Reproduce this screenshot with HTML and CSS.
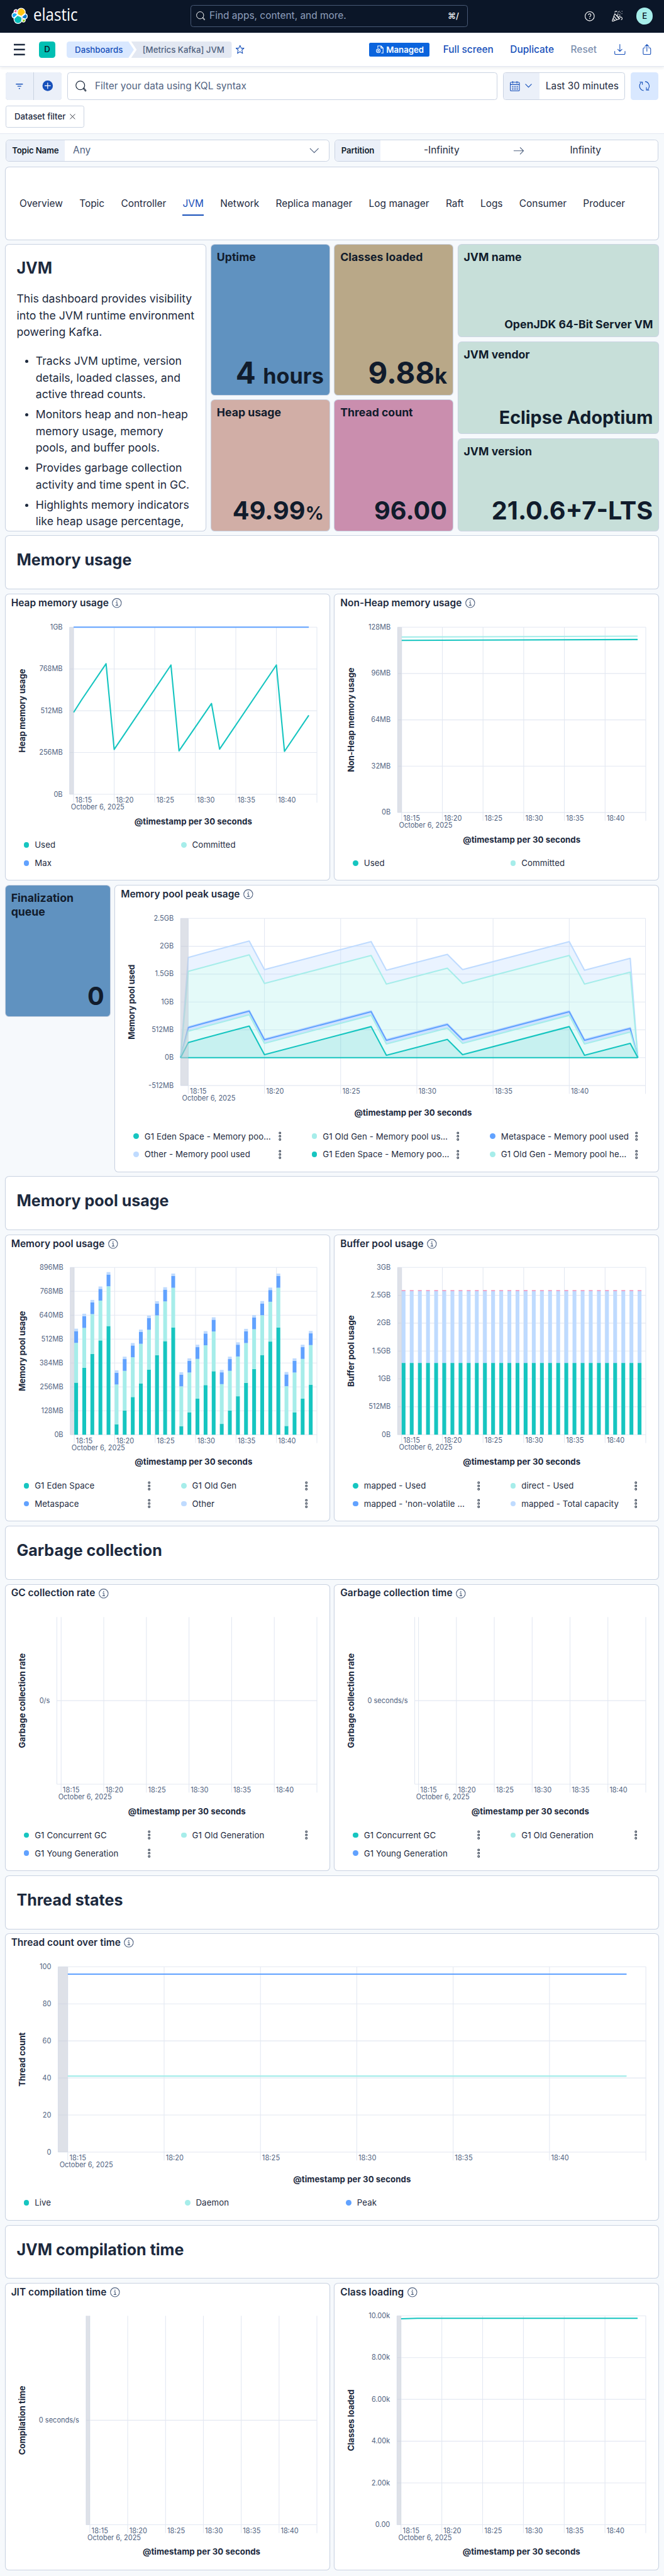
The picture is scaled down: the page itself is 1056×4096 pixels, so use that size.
FILE: index.html
```html
<!DOCTYPE html>
<html lang="en">
<head>
<meta charset="utf-8">
<title>[Metrics Kafka] JVM - Elastic</title>
<link rel="stylesheet" href="styles.css">
</head>
<body>
<svg class="defs" width="0" height="0" aria-hidden="true">
  <symbol id="i-info" viewBox="0 0 16 16"><circle cx="8" cy="8" r="6.5" fill="none" stroke="currentColor"/><path d="M6.4 7.2H8.3V11M6.2 11.2H10" fill="none" stroke="currentColor"/><circle cx="8" cy="5" r=".8" fill="currentColor"/></symbol>
  <symbol id="i-search" viewBox="0 0 16 16"><circle cx="7" cy="7" r="6.3" fill="none" stroke="currentColor" stroke-width="1.1"/><path d="M11.3 11.6l.9-.8 3 3.4a.8.8 0 01-1.1 1.1z" fill="none" stroke="currentColor" stroke-width="1"/></symbol>
  <symbol id="i-menu" viewBox="0 0 4 14"><path d="M.9 1.2h2.2v2.2H.9zM.9 5.9h2.2v2.2H.9zM.9 10.6h2.2v2.2H.9z" fill="none" stroke="currentColor" stroke-width=".9"/></symbol>
</svg>

<header class="topbar">
  <a class="brand" aria-label="Elastic">
    <svg width="24" height="24" viewBox="0 0 32 32"><g stroke="#fff" stroke-width="1.6" stroke-linejoin="round"><path fill="#FEC514" d="M12.58 13.787l7.002 3.211 7.066-6.213a7.849 7.849 0 00.152-1.557c0-4.287-3.464-7.775-7.751-7.775a7.73 7.73 0 00-6.35 3.387l-1.176 6.126 1.057 2.821z"/><path fill="#02BCB7" d="M5.333 21.228A7.956 7.956 0 005.18 22.8c0 4.3 3.487 7.797 7.773 7.797a7.73 7.73 0 006.393-3.406l1.166-6.097-1.556-2.986-7.03-3.215-6.593 6.335z"/><path fill="#F04E98" d="M5.288 9.067l4.8 1.137L11.14 4.73a3.785 3.785 0 00-6.043 3.025c0 .445.07.886.19 1.312z"/><path fill="#1BA9F5" d="M4.872 10.214a5.29 5.29 0 00-3.513 5.001 5.3 5.3 0 003.39 4.951l6.734-6.1-1.236-2.65-5.375-1.202z"/><path fill="#93C90E" d="M20.873 27.19a3.762 3.762 0 002.285.777 3.785 3.785 0 003.594-5.03l-4.8-1.127-1.079 5.38z"/><path fill="#07C" d="M21.848 20.563l5.283 1.238a5.3 5.3 0 003.513-5.003 5.284 5.284 0 00-3.387-4.945l-6.91 6.067 1.501 2.643z"/></g></svg>
    <svg class="wordmark" width="66" height="28" viewBox="0 0 66 28"><text x="0" y="20.6" textLength="64" lengthAdjust="spacingAndGlyphs">elastic</text></svg>
  </a>
  <div class="globalsearch">
    <svg width="13" height="13"><use href="#i-search"/></svg>
    <span>Find apps, content, and more.</span><kbd>⌘/</kbd>
  </div>
  <nav class="topicons">
    <svg width="16" height="16" viewBox="0 0 16 16" fill="none" stroke="#fff"><circle cx="8" cy="8" r="6.6"/><path d="M6.2 6.3a1.8 1.8 0 113 1.3C8.500 8.100 8 8.400 8 9.300"/><path d="M8 10.600v1.200" stroke-width="1.300"/></svg>
    <svg width="16" height="16" viewBox="0 0 16 16" fill="none" stroke="#fff" stroke-linejoin="round"><path d="M4.300 4.400L.7 14.300a.6.6 0 00.8.8l9.900-3.600zM3.200 8.200l4.400 5M2 11.200l2.400 2.900M5.200 5.400l5 5.800M7.300 7.400l2-2.300M9.300 9.300l3-1.500M4.400 2.400C4.400.8 6.500.2 7.600 1.500M12 9.800c1.400-1.400 3.600.1 2.800 2.200-.3.800-1 1-1.600.9M10.400 6.100h1.800"/><path d="M9.200 1.500h1M11.500 3h1M14.200.9h1M14 4.300h1M8.300 3.500h1M11 .9h.8" stroke-dasharray="1 .3"/></svg>
    <span class="avatar">E</span>
  </nav>
</header>

<header class="appbar">
  <svg class="burger" width="16" height="16" viewBox="0 0 16 16"><path d="M0 .9h16M0 8h16M0 15.100h16" stroke="#1D2A3E" stroke-width="2.300"/></svg>
  <span class="space">D</span>
  <nav class="crumbs"><a class="crumb first">Dashboards</a><span class="crumb last">[Metrics Kafka] JVM</span></nav>
  <svg class="star" width="14" height="14" viewBox="0 0 14 14"><path d="M7 1.100l1.700 4h4l-3 2.600 1 4.900L7 10.200l-3.700 2.400 1-4.900-3-2.600h4z" fill="none" stroke="#1750BA" stroke-linejoin="round"/></svg>
  <div class="actions">
    <span class="badge"><svg width="12" height="12" viewBox="0 0 12 12" fill="none" stroke="#fff"><path d="M3.500 4V.9h4.700l2.900 2.900v7.300H8.500M8 .9V4h3"/><circle cx="4.200" cy="8" r="2.700"/><circle cx="4.200" cy="8" r=".8"/></svg>Managed</span>
    <a class="act">Full screen</a><a class="act">Duplicate</a><a class="act off">Reset</a>
    <svg width="16" height="16" viewBox="0 0 16 16" fill="none" stroke="#1750BA"><path d="M8 .2v10.300M4.700 7.300L8 10.600l3.300-3.300M.6 10.200v3.300a1.500 1.500 0 001.500 1.500h11.800a1.500 1.500 0 001.500-1.500v-3.300"/></svg>
    <svg class="share" width="16" height="16" viewBox="0 0 16 16" fill="none" stroke="#1750BA"><path d="M8 10.800V.8M4.900 3.800L8 .7l3.100 3.100M6 5.500H4.100a1.500 1.500 0 00-1.500 1.500v6.500A1.500 1.500 0 004.100 15h7.800a1.500 1.500 0 001.500-1.500V7a1.500 1.500 0 00-1.500-1.500H10"/></svg>
  </div>
</header>

<section class="querybar">
  <div class="query-row">
    <div class="filters">
      <span><svg width="16" height="16" viewBox="0 0 16 16"><path d="M3 5.200h10M5.300 8.300h5.400M7.200 11.500h1.600" stroke="#1750BA" stroke-width="1.300"/></svg></span>
      <span><svg width="16" height="16" viewBox="0 0 16 16"><circle cx="8" cy="7.600" r="7.500" fill="#1750BA"/><path d="M8 3.200v8.800M3.600 7.600h8.800" stroke="#fff" stroke-width="1.100"/></svg></span>
    </div>
    <div class="kql"><svg width="16" height="16"><use href="#i-search"/></svg>Filter your data using KQL syntax</div>
    <div class="date">
      <span class="quick"><svg width="16" height="16" viewBox="0 0 16 16"><rect x="1.500" y="2.500" width="13" height="12.500" rx="1.200" fill="none" stroke="#1750BA"/><path d="M1.500 5.800h13M5 .8v3.400M11 .8v3.400" stroke="#1750BA"/><path d="M4 8.500h8.500M4 10.700h8.500M4 12.800h8.500" stroke="#1750BA" stroke-width="1.200" stroke-dasharray="2 1.200"/></svg>
      <svg width="10" height="6" viewBox="0 0 10 6"><path d="M.5.500L5 5.200 9.500.5" fill="none" stroke="#1750BA"/></svg></span>
      <span class="range">Last 30 minutes</span>
    </div>
    <span class="refresh"><svg width="16" height="16" viewBox="0 0 16 16" fill="none" stroke="#1750BA"><path d="M7 14.500A6.600 6.600 0 013.300 3M1.200 2.300h3.900v3.900M9 1.500A6.600 6.600 0 0112.700 13M14.800 13.700h-3.900V9.800"/></svg></span>
  </div>
  <span class="pill">Dataset filter <svg width="8" height="8" viewBox="0 0 8 8"><path d="M.4.400l7.200 7.200M7.600.4L.4 7.600" stroke="#343741" stroke-width=".9"/></svg></span>
</section>

<main class="dash">
  <div class="controls">
    <div class="control"><label>Topic Name</label><span class="any">Any</span><svg width="14" height="8" viewBox="0 0 14 8"><path d="M.8.800L7 7 13.200.8" fill="none" stroke="#516381"/></svg></div>
    <div class="control"><label>Partition</label><span class="lo">-Infinity</span><svg class="arrow" width="16" height="16" viewBox="0 0 16 16"><path d="M.8 8h14M10 3l5 5-5 5" fill="none" stroke="#516381"/></svg><span class="hi">Infinity</span></div>
  </div>

  <div class="grid">
    <nav class="panel w48 h4 tabs"><a>Overview</a><a>Topic</a><a>Controller</a><a class="on">JVM</a><a>Network</a><a>Replica manager</a><a>Log manager</a><a>Raft</a><a>Logs</a><a>Consumer</a><a>Producer</a></nav>

    <article class="panel w15 h15 prose">
      <h2>JVM</h2>
      <p>This dashboard provides visibility into the JVM runtime environment powering Kafka.</p>
      <ul>
        <li>Tracks JVM uptime, version details, loaded classes, and active thread counts.</li>
        <li>Monitors heap and non-heap memory usage, memory pools, and buffer pools.</li>
        <li>Provides garbage collection activity and time spent in GC.</li>
        <li>Highlights memory indicators like heap usage percentage,</li>
      </ul>
    </article>
    <div class="stack w9 h15">
      <div class="panel tile h8 blue"><h3>Uptime</h3><b class="v42">4 <small>hours</small></b></div>
      <div class="panel tile h7 rose"><h3>Heap usage</h3><b class="v36">49.99<small>%</small></b></div>
    </div>
    <div class="stack w9 h15">
      <div class="panel tile h8 sand"><h3>Classes loaded</h3><b class="v42">9.88<small>k</small></b></div>
      <div class="panel tile h7 pink"><h3>Thread count</h3><b class="v36">96.00</b></div>
    </div>
    <div class="stack w15 h15">
      <div class="panel tile h5 mint"><h3>JVM name</h3><b class="v16">OpenJDK 64-Bit Server VM</b></div>
      <div class="panel tile h5 mint"><h3>JVM vendor</h3><b class="v26">Eclipse Adoptium</b></div>
      <div class="panel tile h5 mint"><h3>JVM version</h3><b class="v36">21.0.6+7-LTS</b></div>
    </div>

    <div class="panel w48 h3 section"><h2>Memory usage</h2></div>

    <section class="panel w24 h15 vis"><h4>Heap memory usage <svg><use href="#i-info"/></svg></h4><svg class="chart" data-chart="heap"></svg>
      <ul class="legend"><li class="c1">Used</li><li class="c2">Committed</li><li class="c3">Max</li></ul></section>
    <section class="panel w24 h15 vis"><h4>Non-Heap memory usage <svg><use href="#i-info"/></svg></h4><svg class="chart" data-chart="nonheap"></svg>
      <ul class="legend"><li class="c1">Used</li><li class="c2">Committed</li></ul></section>

    <div class="stack w8 h15"><div class="panel tile h7 blue"><h3>Finalization queue</h3><b class="v36">0</b></div></div>
    <section class="panel w40 h15 vis"><h4>Memory pool peak usage <svg><use href="#i-info"/></svg></h4><svg class="chart" data-chart="peak"></svg>
      <ul class="legend three">
        <li class="c1">G1 Eden Space - Memory poo…<svg><use href="#i-menu"/></svg></li><li class="c2">G1 Old Gen - Memory pool us…<svg><use href="#i-menu"/></svg></li><li class="c3">Metaspace - Memory pool used<svg><use href="#i-menu"/></svg></li>
        <li class="c4">Other - Memory pool used<svg><use href="#i-menu"/></svg></li><li class="c1">G1 Eden Space - Memory poo…<svg><use href="#i-menu"/></svg></li><li class="c2">G1 Old Gen - Memory pool he…<svg><use href="#i-menu"/></svg></li>
      </ul></section>

    <div class="panel w48 h3 section"><h2>Memory pool usage</h2></div>

    <section class="panel w24 h15 vis"><h4>Memory pool usage <svg><use href="#i-info"/></svg></h4><svg class="chart" data-chart="pool"></svg>
      <ul class="legend"><li class="c1">G1 Eden Space<svg><use href="#i-menu"/></svg></li><li class="c2">G1 Old Gen<svg><use href="#i-menu"/></svg></li><li class="c3">Metaspace<svg><use href="#i-menu"/></svg></li><li class="c4">Other<svg><use href="#i-menu"/></svg></li></ul></section>
    <section class="panel w24 h15 vis"><h4>Buffer pool usage <svg><use href="#i-info"/></svg></h4><svg class="chart" data-chart="buffer"></svg>
      <ul class="legend"><li class="c1">mapped - Used<svg><use href="#i-menu"/></svg></li><li class="c2">direct - Used<svg><use href="#i-menu"/></svg></li><li class="c3">mapped - 'non-volatile …<svg><use href="#i-menu"/></svg></li><li class="c4">mapped - Total capacity<svg><use href="#i-menu"/></svg></li></ul></section>

    <div class="panel w48 h3 section"><h2>Garbage collection</h2></div>

    <section class="panel w24 h15 vis"><h4>GC collection rate <svg><use href="#i-info"/></svg></h4><svg class="chart" data-chart="gcrate"></svg>
      <ul class="legend"><li class="c1">G1 Concurrent GC<svg><use href="#i-menu"/></svg></li><li class="c2">G1 Old Generation<svg><use href="#i-menu"/></svg></li><li class="c3">G1 Young Generation<svg><use href="#i-menu"/></svg></li></ul></section>
    <section class="panel w24 h15 vis"><h4>Garbage collection time <svg><use href="#i-info"/></svg></h4><svg class="chart" data-chart="gctime"></svg>
      <ul class="legend"><li class="c1">G1 Concurrent GC<svg><use href="#i-menu"/></svg></li><li class="c2">G1 Old Generation<svg><use href="#i-menu"/></svg></li><li class="c3">G1 Young Generation<svg><use href="#i-menu"/></svg></li></ul></section>

    <div class="panel w48 h3 section"><h2>Thread states</h2></div>

    <section class="panel w48 h15 vis"><h4>Thread count over time <svg><use href="#i-info"/></svg></h4><svg class="chart" data-chart="threads"></svg>
      <ul class="legend four"><li class="c1">Live</li><li class="c2">Daemon</li><li class="c3">Peak</li></ul></section>

    <div class="panel w48 h3 section"><h2>JVM compilation time</h2></div>

    <section class="panel w24 h15 vis"><h4>JIT compilation time <svg><use href="#i-info"/></svg></h4><svg class="chart" data-chart="jit"></svg></section>
    <section class="panel w24 h15 vis"><h4>Class loading <svg><use href="#i-info"/></svg></h4><svg class="chart" data-chart="classes"></svg></section>
  </div>
</main>
<script src="charts.js"></script>
</body>
</html>
```
FILE: styles.css
```css
* { box-sizing: border-box; }
html { background: #f6f9fc; overflow: hidden; }
body {
  margin: 0;
  width: 957px;
  height: 3712px;
  overflow: hidden;
  zoom: 1.10345;
  background: #f6f9fc;
  color: #1d2a3e;
  font: 400 14px/20px Inter, "Liberation Sans", sans-serif;
}
svg { display: block; flex: none; overflow: visible; }
.defs { position: absolute; }
h2, h3, h4, p, ul { margin: 0; padding: 0; }
ul { list-style: none; }

.topbar {
  display: flex;
  align-items: center;
  height: 48px;
  padding: 0 16px 1px;
  background: #0b1628;
  border-bottom: 1px solid #e3e8f2;
}
.brand { display: flex; align-items: center; gap: 8px; width: 259px; }
.wordmark text { font: 400 24px "Open Sans", sans-serif; fill: #fff; }
.globalsearch {
  display: flex;
  align-items: center;
  gap: 6px;
  width: 399.5px;
  height: 32px;
  padding: 0 12px 0 7px;
  border: 1px solid #485975;
  border-radius: 4px;
  color: #8e9fbc;
}
.globalsearch svg { color: #fff; }
.globalsearch kbd { margin-left: auto; font: 500 12px Inter, "DejaVu Sans", sans-serif; color: #fff; }
.topicons { display: flex; align-items: center; gap: 23.5px; margin-left: auto; }
.topicons .avatar { margin-left: -4px; }
.avatar {
  width: 24px;
  height: 24px;
  border-radius: 50%;
  background: #a6edea;
  color: #07101f;
  font: 500 12px/24px Inter, sans-serif;
  text-align: center;
}

.appbar {
  position: relative;
  display: flex;
  align-items: center;
  height: 48px;
  padding: 0 17px 0 20px;
  background: #fff;
  border-bottom: 1px solid #e3e8f2;
  box-shadow: 0 2px 4px rgba(43, 57, 79, .09);
}
.space {
  width: 24px;
  height: 24px;
  margin-left: 20px;
  border-radius: 4px;
  background: #00bfb3;
  color: #07101f;
  font: 500 12px/23px Inter, sans-serif;
  text-align: center;
}
.crumbs { display: flex; margin-left: 16px; font: 500 12px/24px Inter, sans-serif; }
.crumb { height: 24px; }
.crumb.first {
  width: 97px;
  padding-left: 12px;
  border-radius: 4px 0 0 4px;
  background: #d9e8ff;
  color: #1750ba;
  clip-path: polygon(0 0, 89px 0, 100% 50%, 89px 100%, 0 100%);
}
.crumb.last {
  width: 145px;
  margin-left: -4px;
  padding-left: 16.5px;
  border-radius: 0 4px 4px 0;
  background: #e3e8f2;
  color: #516381;
  clip-path: polygon(0 0, 100% 0, 100% 100%, 0 100%, 8px 50%);
}
.star { margin-left: 5px; }
.actions { display: flex; align-items: center; margin-left: auto; }
.badge {
  display: flex;
  align-items: center;
  gap: 4px;
  width: 87px;
  height: 20px;
  padding-left: 9px;
  border-radius: 2px;
  background: #0b64dd;
  color: #fff;
  font: 600 12px/20px Inter, sans-serif;
}
.act { margin-left: 20px; color: #1750ba; font-weight: 500; }
.act + .act { margin-left: 24px; }
.act.off { color: #7d90b0; }
.act + svg { margin-left: 25px; }
.share { margin-left: 23px; }

.querybar {
  height: 97px;
  padding: 8px 8px 0;
  background: #fff;
  border-bottom: 1px solid #e3e8f2;
}
.query-row { display: flex; gap: 8px; height: 40px; }
.filters { display: flex; gap: 1px; width: 81px; background: #cad3e2; border-radius: 4px; overflow: hidden; }
.filters span { display: grid; place-items: center; width: 40px; background: #ebf0f9; }
.kql {
  display: flex;
  align-items: center;
  gap: 12px;
  flex: 1;
  padding-left: 11px;
  border: 1px solid #cad3e2;
  border-radius: 4px;
  color: #516381;
}
.kql svg { color: #1d2a3e; }
.date { display: flex; width: 176px; border: 1px solid #cad3e2; border-radius: 4px; overflow: hidden; line-height: 38px; }
.quick { display: flex; align-items: center; gap: 7px; width: 52px; padding-left: 8px; background: #ebf0f9; }
.range { padding-left: 8.5px; }
.refresh { display: grid; place-items: center; width: 40px; background: #d9e8ff; border-radius: 4px; }
.pill {
  display: flex;
  align-items: center;
  gap: 6px;
  width: 113px;
  height: 32px;
  margin-top: 8px;
  padding-left: 12px;
  border: 1px solid #cad3e2;
  border-radius: 3px;
  font-size: 12px;
  font-weight: 500;
}

.dash { padding: 8px 8px 7px; }
.controls { display: grid; grid-template-columns: 1fr 1fr; gap: 8px; margin-bottom: 8px; }
.control {
  display: flex;
  align-items: center;
  height: 32px;
  background: #fff;
  border: 1px solid #cad3e2;
  border-radius: 5px;
  overflow: hidden;
}
.control label { padding: 0 8.5px; background: #ebf0f9; font: 600 12px/30px Inter, sans-serif; color: #111c2c; letter-spacing: -.15px; }
.any { flex: 1; padding-left: 12px; color: #516381; }
.control > svg:last-child { margin-right: 13.5px; }
.lo { width: 177px; text-align: center; }
.arrow { margin: 0 15px; }
.hi { width: 146px; text-align: center; }

.grid { display: grid; grid-template-columns: repeat(48, 1fr); grid-auto-rows: 20px; gap: 8px; }
.stack { display: grid; grid-auto-rows: 20px; gap: 8px; }
.w48 { grid-column: span 48; } .w40 { grid-column: span 40; } .w24 { grid-column: span 24; }
.w15 { grid-column: span 15; } .w9 { grid-column: span 9; } .w8 { grid-column: span 8; }
.h3 { grid-row: span 3; } .h4 { grid-row: span 4; } .h5 { grid-row: span 5; }
.h7 { grid-row: span 7; } .h8 { grid-row: span 8; } .h15 { grid-row: span 15; }

.panel { min-width: 0; background: #fff; border-radius: 5px; box-shadow: 0 0 0 1px #cad3e2; }
.tabs { display: flex; align-items: center; gap: 23.8px; padding-left: 20px; }
.tabs a { padding: 9px 0 5px; border-bottom: 2px solid transparent; }
.tabs .on { color: #1750ba; border-color: #1750ba; }

.prose { padding: 18px 16px 0; overflow: hidden; font-size: 16px; line-height: 24px; }
.prose h2, .section h2 { font-size: 22.7px; line-height: 32px; font-weight: 700; }
.prose p { margin: 16px -8px 18px 0; }
.prose ul { list-style: disc; padding-left: 27.5px; }
.prose li { margin-bottom: 5px; }
.prose li::marker { font-size: 14px; }
.section { padding: 19px 16px 0; }

.tile { display: flex; flex-direction: column; justify-content: space-between; padding: 8px; color: #111c2c; }
.tile h3 { font-size: 16px; line-height: 20px; font-weight: 700; }
.tile b { text-align: right; font-weight: 700; white-space: nowrap; line-height: 1; }
.v42 { font-size: 43px; padding-bottom: 2px; }
.v42 small { font-size: 31px; }
.v36 { font-size: 36px; padding-bottom: 2px; }
.v36 small { font-size: 26px; }
.v26 { font-size: 26px; padding-bottom: 2px; }
.v16 { font-size: 16px; padding-bottom: 1px; }
.blue { background: #6092c0; }
.rose { background: #d1aea6; }
.sand { background: #b9a888; }
.pink { background: #ca8eae; }
.mint { background: #c7dfd9; }

.vis { display: flex; flex-direction: column; }
.vis h4 { display: flex; align-items: center; gap: 4px; height: 25px; margin-bottom: -1px; padding-left: 8px; font-size: 14px; font-weight: 600; letter-spacing: .04px; }
.vis h4 svg { width: 16px; height: 16px; color: #516381; }
.chart { width: 100%; font-size: 10px; }
.chart .grid-line { stroke: #e3e8f2; stroke-width: 1; }
.chart .tick { fill: #516381; }
.chart .title { fill: #1d2a3e; font-size: 12px; font-weight: 700; text-anchor: middle; }
.chart .band { fill: #c3c9d6; fill-opacity: .55; }
.chart .line { fill: none; stroke-width: 1.9; stroke-linejoin: round; }

.legend { display: grid; grid-template-columns: 227px 227px; grid-auto-rows: 26px; padding-left: 26px; font-size: 12px; letter-spacing: .1px; }
.legend.three { grid-template-columns: repeat(3, 257px); }
.legend.four { grid-template-columns: repeat(3, 232.3px); }
.legend li { display: flex; align-items: center; padding-right: 44px; color: #1d2a3e; white-space: nowrap; }
.legend li::before { content: ""; flex: none; width: 8px; height: 8px; margin-right: 8px; border-radius: 50%; }
.legend li svg { width: 4px; height: 14px; margin-left: auto; }
.legend .c1::before { background: #16c5c0; }
.legend .c2::before { background: #a6edea; }
.legend .c3::before { background: #61a2ff; }
.legend .c4::before { background: #bfdbff; }
```
FILE: charts.js
```js
const TEAL = '#16C5C0', AQUA = '#A6EDEA', BLUE = '#61A2FF', SKY = '#BFDBFF', PINK = '#EE72A6';
const minutes = Array.from({ length: 30 }, (_, i) => i);

// Knots at which the sawtooth heap series change direction, in minutes after 18:15.
const knots = [0, 1, 4, 5, 12, 13, 17, 18, 25, 26, 29];
const zip = values => values.map((v, i) => [knots[i], v]);
const flat = (a, b = a) => [[0, a], [29, b]];

const eden = [279, 359, 433, 505, 582, 56, 129, 202, 274, 349, 426, 501, 574, 46, 120, 193, 266, 340,
  58, 129, 206, 278, 352, 427, 499, 574, 47, 120, 193, 267];
const peakEden = [278, 355, 581, 55, 571, 44, 336, 55, 571, 44, 263];
const lift = by => peakEden.map(v => v + by);

// yl is the drawn length of the vertical axis title.
const charts = {
  heap: { width: 466.5, left: 92.1, bottom: 287.7, max: 1024, y: 'Heap memory usage', yl: 120.5,
    labels: ['0B', '256MB', '512MB', '768MB', '1GB'],
    lines: [[BLUE, flat(1024)], [TEAL, zip([502, 580, 800, 275, 792, 266, 556, 277, 792, 263, 484])]] },
  nonheap: { width: 466.5, left: 90.9, bottom: 313.9, max: 128, y: 'Non-Heap memory usage', yl: 150.5,
    labels: ['0B', '32MB', '64MB', '96MB', '128MB'],
    lines: [[AQUA, flat(121.2, 121.8)], [TEAL, flat(118.9, 119.5)]] },
  peak: { width: 782.9, left: 94.5, right: 764.5, bottom: 287.8, min: -512, max: 2560, y: 'Memory pool used', yl: 107.9,
    labels: ['-512MB', '0B', '512MB', '1GB', '1.5GB', '2GB', '2.5GB'],
    areas: [[TEAL, peakEden, .24], [AQUA, lift(208), .3], [BLUE, lift(274), .3], [SKY, lift(290), .5], [AQUA, lift(1308), .3], [SKY, lift(1563), .32]] },
  pool: { width: 466.5, left: 93, bottom: 288, max: 896, y: 'Memory pool usage', yl: 115.5,
    labels: ['0B', '128MB', '256MB', '384MB', '512MB', '640MB', '768MB', '896MB'],
    bars: minutes.map(i => [[TEAL, eden[i]], [AQUA, 213], [BLUE, 63], [SKY, 13]]) },
  buffer: { width: 466.5, left: 90.9, bottom: 287.9, max: 3, y: 'Buffer pool usage', yl: 103.1,
    labels: ['0B', '512MB', '1GB', '1.5GB', '2GB', '2.5GB', '3GB'],
    bars: minutes.map(() => [[TEAL, 1.287], [SKY, 1.291], [PINK, .013]]) },
  gcrate: { width: 466.5, left: 73.8, bottom: 287.7, y: 'Garbage collection rate', yl: 136.5, empty: '0/s', noBand: true },
  gctime: { width: 466.5, left: 115.6, bottom: 287.7, y: 'Garbage collection rate', yl: 136.5, empty: '0 seconds/s', noBand: true },
  threads: { width: 941, left: 75.6, right: 922.7, bottom: 314, max: 100, y: 'Thread count', yl: 78.1,
    labels: ['0', '20', '40', '60', '80', '100'], lines: [[AQUA, flat(41)], [BLUE, flat(96)]] },
  jit: { width: 466.5, left: 115.9, bottom: 348, y: 'Compilation time', yl: 99.4, empty: '0 seconds/s' },
  classes: { width: 466.5, left: 90, bottom: 348, max: 10, y: 'Classes loaded', yl: 88.7,
    labels: ['0.00', '2.00k', '4.00k', '6.00k', '8.00k', '10.00k'], lines: [[TEAL, [[0, 9.86], [2, 9.88], [29, 9.88]]]] },
};

function draw(svg, c) {
  const top = 46.9, left = c.left, right = c.right || 448.6, bottom = c.bottom, min = c.min || 0;
  const step = (right - left) / 30.5;
  const X = t => +(left + (t + .5) * step).toFixed(2);
  const Y = v => +(bottom - (v - min) / (c.max - min) * (bottom - top)).toFixed(2);
  const points = list => list.map(([t, v]) => X(t) + ',' + Y(v)).join(' ');
  const rule = (x1, y1, x2, y2) => `<line class="grid-line" x1="${x1}" y1="${y1}" x2="${x2}" y2="${y2}"/>`;
  const height = (bottom > 340 ? 412 : bottom > 300 ? 374 : 348) - 24;
  let out = '';

  for (let t = 0; t <= 30; t += 5) {
    out += rule(X(t), top, X(t), bottom + 12);
    if (t < 30) out += `<text class="tick" x="${X(t) + 2.4}" y="${bottom + 12}" textLength="${t ? 25.6 : 24}">18:${15 + t}</text>`;
  }
  out += rule(left, top, left, bottom);
  if (c.empty) {
    const mid = (top + bottom) / 2;
    out += rule(left, mid, right, mid) + rule(left, bottom, right, bottom);
    out += `<text class="tick" text-anchor="end" x="${left - 10}" y="${mid + 3.2}">${c.empty}</text>`;
  } else {
    c.labels.forEach((label, i) => {
      const y = bottom - i * (bottom - top) / (c.labels.length - 1);
      out += rule(left, y, right, y);
      out += `<text class="tick" text-anchor="end" x="${left - 10}" y="${y + 3.2}">${label}</text>`;
    });
  }

  let below = null;
  const outlines = [];
  (c.areas || []).forEach(([color, values, alpha]) => {
    const edge = [[-.5, 0], ...zip(values), [29.5, 0]];
    const floor = below || [[-.5, 0], [29.5, 0]];
    out += `<polygon points="${points(edge.concat([...floor].reverse()))}" fill="${color}" fill-opacity="${alpha}"/>`;
    outlines.push([color, edge]);
    below = edge;
  });
  if (c.areas) outlines.push([TEAL, [[-.5, 0], [29.5, 0]]]);
  const order = c.areas ? [5, 4, 3, 2, 1, 0, 6].map(i => outlines[i]) : c.lines || [];
  order.forEach(([color, list]) => { out += `<polyline class="line" stroke="${color}" points="${points(list)}"/>`; });

  (c.bars || []).forEach((parts, t) => {
    let sum = 0;
    parts.forEach(([color, v]) => {
      out += `<rect x="${X(t)}" y="${Y(sum + v)}" width="${(step * .47).toFixed(2)}" height="${(Y(sum) - Y(sum + v)).toFixed(2)}" fill="${color}"/>`;
      sum += v;
    });
  });
  if (!c.noBand) out += `<rect class="band" x="${left}" y="${top}" width="${(step / 2).toFixed(2)}" height="${bottom - top}"/>`;

  const cy = (top + bottom) / 2;
  out += `<text class="tick" x="${left + 2}" y="${bottom + 22}" textLength="77">October 6, 2025</text>`;
  out += `<text class="title" x="${(left + right) / 2}" y="${bottom + 43.3}" textLength="169.5">@timestamp per 30 seconds</text>`;
  out += `<text class="title" transform="translate(27.8 ${cy}) rotate(-90)" textLength="${c.yl}">${c.y}</text>`;
  svg.setAttribute('viewBox', `0 24 ${c.width} ${height}`);
  svg.style.height = height + 'px';
  svg.innerHTML = out;
}

document.querySelectorAll('[data-chart]').forEach(svg => draw(svg, charts[svg.dataset.chart]));
```
